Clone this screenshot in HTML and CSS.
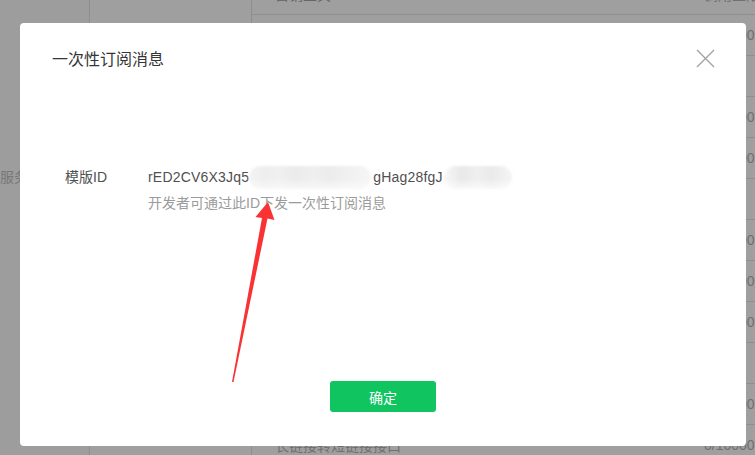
FILE: index.html
```html
<!DOCTYPE html>
<html lang="zh-CN">
<head>
<meta charset="utf-8">
<title>一次性订阅消息</title>
<link rel="stylesheet" href="styles.css">
</head>
<body>
<div class="page">
  <aside class="side">
    <div class="side-item">服务</div>
  </aside>
  <div class="mid"></div>
  <div class="table">
    <div class="row head"><span class="name">营销工具</span><span class="quota">调用上限</span></div>
    <div class="row"><span class="name">获取模板列表</span><span class="quota">0/10000</span></div>
    <div class="row"><span class="name">订阅消息</span><span class="quota">请求</span></div>
    <div class="row"><span class="name">发送消息</span><span class="quota">0/10000</span></div>
    <div class="row"><span class="name">获取用户</span><span class="quota">0/10000</span></div>
    <div class="row"><span class="name">素材管理</span><span class="quota">请求</span></div>
    <div class="row"><span class="name">获取素材</span><span class="quota">0/10000</span></div>
    <div class="row"><span class="name">上传素材</span><span class="quota">0/10000</span></div>
    <div class="row"><span class="name">删除素材</span><span class="quota">0/10000</span></div>
    <div class="row"><span class="name">网页授权</span><span class="quota">网页</span></div>
    <div class="row"><span class="name">生成二维码</span><span class="quota">0/10000</span></div>
    <div class="row"><span class="name">长链接转短链接接口</span><span class="quota">0/10000</span></div>
  </div>
</div>

<div class="dialog">
  <div class="dialog-title">一次性订阅消息</div>
  <button class="close" type="button" aria-label="关闭">
    <svg width="19" height="19" viewBox="0 0 19 19"><path d="M1 1 L18 18 M18 1 L1 18" stroke="#a3a3a3" stroke-width="1.4" fill="none"/></svg>
  </button>
  <div class="dialog-body">
    <div class="field">
      <div class="label">模版ID</div>
      <div class="content">
        <div class="value">rED2CV6X3Jq5<span class="mask mask-a"></span>gHag28fgJ<span class="mask mask-b"></span></div>
        <div class="hint">开发者可通过此ID下发一次性订阅消息</div>
      </div>
    </div>
  </div>
  <div class="dialog-foot">
    <button class="btn-primary" type="button">确定</button>
  </div>
</div>

<svg class="arrow" width="755" height="455" viewBox="0 0 755 455">
  <polygon points="268,202 274.5,220 267.5,218.5 233.5,382 232,382 262,218 255.5,217" fill="#f93333"/>
</svg>
</body>
</html>
```

FILE: styles.css
```css
html, body {
  margin: 0;
  padding: 0;
  width: 755px;
  height: 455px;
  overflow: hidden;
  background: #9f9f9f;
  font-family: "Liberation Sans", "Noto Sans CJK SC", sans-serif;
}

.page {
  display: flex;
  height: 455px;
}

.side {
  width: 89px;
  border-right: 1px solid #8e8e8e;
  background: #9d9d9d;
  flex: none;
}

.side-item {
  margin-top: 167px;
  font-size: 14px;
  line-height: 20px;
  color: #777;
  white-space: nowrap;
}

.mid {
  width: 161px;
  border-right: 1px solid #8e8e8e;
  flex: none;
}

.table {
  flex: 1;
  margin-top: -26px;
}

.row {
  display: flex;
  height: 40px;
  border-bottom: 1px solid #8f8f8f;
  align-items: center;
  font-size: 14px;
  color: #707070;
  white-space: nowrap;
}

.row .name {
  padding-left: 23px;
  width: 429px;
  flex: none;
}

.row .quota {
  flex: none;
}

.row.head .name {
  color: #666;
}

.dialog {
  position: absolute;
  left: 20px;
  top: 23px;
  width: 726px;
  height: 423px;
  background: #fff;
  border-radius: 4px;
  display: flex;
  flex-direction: column;
}

.dialog-title {
  padding: 25px 0 0 32px;
  font-size: 16px;
  line-height: 24px;
  color: #353535;
}

.close {
  position: absolute;
  right: 31px;
  top: 26px;
  width: 19px;
  height: 19px;
  padding: 0;
  border: 0;
  background: none;
  display: flex;
}

.dialog-body {
  padding: 95px 0 0 45px;
  flex: 1;
}

.field {
  display: flex;
}

.label {
  width: 83px;
  flex: none;
  font-size: 14px;
  line-height: 20px;
  color: #505050;
}

.content {
  display: flex;
  flex-direction: column;
  gap: 6px;
}

.value {
  display: flex;
  align-items: center;
  font-size: 14px;
  line-height: 20px;
  color: #505050;
  height: 20px;
  letter-spacing: 0.2px;
}

.mask {
  display: block;
  height: 23px;
  border-radius: 12px;
  filter: blur(1px);
}

.mask-a {
  width: 122px;
  margin-right: 2px;
  background:
    linear-gradient(180deg, rgba(255,255,255,0) 55%, rgba(255,255,255,0.6) 100%),
    linear-gradient(90deg, #f4f4f4 0%, #eeeeee 12%, #f0f0f0 25%, #ebebeb 38%, #efefef 52%, #ececec 66%, #f0f0f0 80%, #f6f6f6 100%);
}

.mask-b {
  width: 68px;
  margin-left: 1px;
  background:
    linear-gradient(180deg, rgba(255,255,255,0) 55%, rgba(255,255,255,0.7) 100%),
    linear-gradient(90deg, #f8f8f8 0%, #e9e9e9 25%, #efefef 50%, #eaeaea 70%, #f5f5f5 100%);
}

.hint {
  font-size: 14px;
  line-height: 20px;
  color: #9b9b9b;
}

.dialog-foot {
  display: flex;
  justify-content: center;
  padding-bottom: 34px;
}

.btn-primary {
  width: 106px;
  height: 31px;
  border: 0;
  border-radius: 3px;
  background: #10c45f;
  color: #fff;
  font-family: "Liberation Sans", "Noto Sans CJK SC", sans-serif;
  font-size: 14px;
  padding: 0;
}

.arrow {
  position: absolute;
  left: 0;
  top: 0;
  pointer-events: none;
}
```
